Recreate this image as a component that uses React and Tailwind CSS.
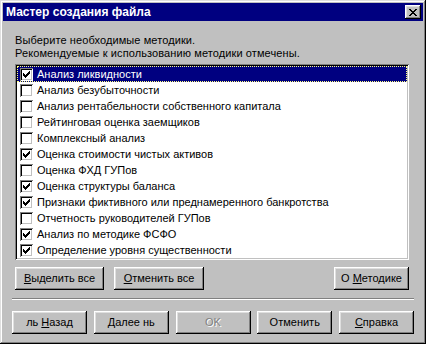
import React, { useState } from 'react';

const METHODS = [
  { name: 'Анализ ликвидности', checked: true },
  { name: 'Анализ безубыточности', checked: false },
  { name: 'Анализ рентабельности собственного капитала', checked: false },
  { name: 'Рейтинговая оценка заемщиков', checked: false },
  { name: 'Комплексный анализ', checked: false },
  { name: 'Оценка стоимости чистых активов', checked: true },
  { name: 'Оценка ФХД ГУПов', checked: false },
  { name: 'Оценка структуры баланса', checked: true },
  { name: 'Признаки фиктивного или преднамеренного банкротства', checked: true },
  { name: 'Отчетность руководителей ГУПов', checked: false },
  { name: 'Анализ по методике ФСФО', checked: true },
  { name: 'Определение уровня существенности', checked: true }
];

const raised =
  'bg-[#c0c0c0] shadow-[inset_-1px_-1px_0_#000,inset_1px_1px_0_#fff,inset_-2px_-2px_0_#808080,inset_2px_2px_0_#dfdfdf]';

function CheckBox({ checked }) {
  return (
    <div className="w-[13px] h-[13px] shrink-0 bg-white shadow-[inset_1px_1px_0_#808080,inset_-1px_-1px_0_#fff,inset_2px_2px_0_#000,inset_-2px_-2px_0_#c0c0c0]">
      {checked && (
        <svg width="13" height="13" viewBox="0 0 13 13" shapeRendering="crispEdges" className="block">
          <path
            fill="#000"
            d="M9 3h1v1h-1z M8 4h2v1h-2z M3 5h1v1h-1z M7 5h3v1h-3z M3 6h2v1h-2z M6 6h3v1h-3z M3 7h5v1h-5z M4 8h3v1h-3z M5 9h1v1h-1z"
          />
        </svg>
      )}
    </div>
  );
}

function Button({ children, className = '', disabled }) {
  return (
    <button
      disabled={disabled}
      className={`${raised} h-[23px] flex items-center justify-center text-[11px] leading-none ${
        disabled ? 'text-[#808080] [text-shadow:1px_1px_0_#fff]' : 'text-black'
      } ${className}`}
    >
      {children}
    </button>
  );
}

export default function App() {
  const [items, setItems] = useState(METHODS);
  const [selected, setSelected] = useState(0);

  const toggle = (i) => {
    setSelected(i);
    setItems(items.map((it, idx) => (idx === i ? { ...it, checked: !it.checked } : it)));
  };

  return (
    <div className="w-[426px] h-[344px] p-[3px] bg-[#c0c0c0] font-['Liberation_Sans',Arial,sans-serif] text-black shadow-[inset_-1px_-1px_0_#000,inset_1px_1px_0_#dfdfdf,inset_-2px_-2px_0_#808080,inset_2px_2px_0_#fff]">
      {/* заголовок */}
      <div className="h-[18px] bg-[#000080] flex items-center justify-between pl-[3px] pr-[2px]">
        <span className="text-white font-bold text-[12px] leading-none">Мастер создания файла</span>
        <div className={`${raised} w-[16px] h-[14px] flex items-center justify-center`}>
          <svg width="8" height="7" viewBox="0 0 8 7" shapeRendering="crispEdges" className="block">
            <path
              fill="#000"
              d="M0 0h2v1h-2z M6 0h2v1h-2z M1 1h2v1h-2z M5 1h2v1h-2z M2 2h4v1h-4z M3 3h2v1h-2z M2 4h4v1h-4z M1 5h2v1h-2z M5 5h2v1h-2z M0 6h2v1h-2z M6 6h2v1h-2z"
            />
          </svg>
        </div>
      </div>

      <div className="px-[9px]">
        <div className="mt-[13px] ml-[3px] text-[11px] leading-[13px] tracking-[0.1px]">
          <div>Выберите необходимые методики.</div>
          <div>Рекомендуемые к использованию методики отмечены.</div>
        </div>

        {/* список методик */}
        <div className="mt-[4px] ml-[3px] w-[394px] h-[196px] p-[2px] bg-white shadow-[inset_1px_1px_0_#808080,inset_-1px_-1px_0_#fff,inset_2px_2px_0_#000,inset_-2px_-2px_0_#c0c0c0]">
          {items.map((it, i) => (
            <div
              key={it.name}
              onClick={() => toggle(i)}
              className={`h-[16px] flex items-center gap-[4px] pl-[1px] text-[11px] leading-none ${
                selected === i
                  ? 'bg-[#000080] text-white border border-dotted border-[#ffff80]'
                  : 'border border-transparent'
              }`}
            >
              <div className="ml-[1px]">
                <CheckBox checked={it.checked} />
              </div>
              <span>{it.name}</span>
            </div>
          ))}
        </div>

        <div className="mt-[7px] ml-[3px] w-[394px] flex">
          <Button className="w-[89px]">
            <u>В</u>ыделить все
          </Button>
          <Button className="w-[90px] ml-[10px]">
            <u>О</u>тменить все
          </Button>
          <Button className="w-[75px] ml-auto">
            О&nbsp;<u>М</u>етодике
          </Button>
        </div>

        <div className="mt-[8px] h-[2px] border-t border-t-[#808080] border-b border-b-white" />

        <div className="mt-[11px] flex justify-between">
          <Button className="w-[75px]">
            ль&nbsp;<u>Н</u>азад
          </Button>
          <Button className="w-[75px]">
            <u>Д</u>алее&nbsp;нь
          </Button>
          <Button className="w-[75px]" disabled>
            OK
          </Button>
          <Button className="w-[75px]">Отменить</Button>
          <Button className="w-[75px]">
            <u>С</u>правка
          </Button>
        </div>
      </div>
    </div>
  );
}
